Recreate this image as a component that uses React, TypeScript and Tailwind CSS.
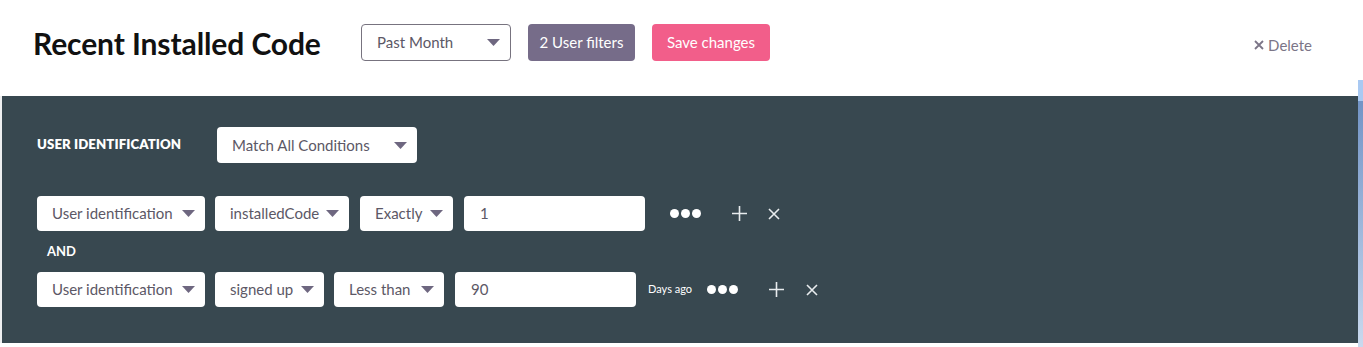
import React from 'react';

const Caret = ({ className = '' }: { className?: string }) => (
    <svg width="13" height="7" viewBox="0 0 13 7" className={className}>
        <path d="M0 0 H13 L6.5 7 Z" fill="#6e6780" />
    </svg>
);

const Select = ({ label, width, className = '' }: { label: string, width: number, className?: string }) => (
    <div
        className={`h-[35px] bg-white rounded-[4px] flex items-center justify-between pl-[15px] pr-[10px] text-[15px] text-[#5c5866] ${className}`}
        style={{ width }}
    >
        <span>{label}</span>
        <Caret />
    </div>
);

const Dots = () => (
    <div className="flex items-center gap-[2px]">
        <span className="w-[9px] h-[9px] rounded-full bg-white" />
        <span className="w-[9px] h-[9px] rounded-full bg-white" />
        <span className="w-[9px] h-[9px] rounded-full bg-white" />
    </div>
);

const Plus = () => (
    <svg width="15" height="15" viewBox="0 0 15 15">
        <path d="M7.5 0 V15 M0 7.5 H15" stroke="#e8ecee" strokeWidth="1.6" />
    </svg>
);

const Cross = () => (
    <svg width="12" height="12" viewBox="0 0 12 12">
        <path d="M1 1 L11 11 M11 1 L1 11" stroke="#e8ecee" strokeWidth="1.6" />
    </svg>
);

const App = () => {
    return (
        <div className="w-[1363px] h-[347px] bg-white flex overflow-hidden" style={{ fontFamily: 'Lato, "Open Sans", sans-serif' }}>
            <div className="flex-1 flex flex-col">
                {/* header */}
                <div className="h-[96px] flex items-center pl-[33px] pr-[46px]">
                    <h1 className="text-[30px] font-bold text-[#111] tracking-[-0.1px] w-[328px] -mt-[10px]">Recent Installed Code</h1>
                    <div className="flex items-center gap-[17px] -mt-[11px]">
                        <div className="w-[150px] h-[37px] border border-[#77737f] rounded-[4px] flex items-center justify-between pl-[15px] pr-[10px] text-[15px] text-[#5c5866]">
                            <span>Past Month</span>
                            <Caret />
                        </div>
                        <button className="w-[107px] h-[37px] rounded-[4px] bg-[#766c89] text-white text-[15px]">2 User filters</button>
                        <button className="w-[118px] h-[37px] rounded-[4px] bg-[#f25e8a] text-white text-[15px]">Save changes</button>
                    </div>
                    <div className="ml-auto flex items-center gap-[4px] text-[15px] text-[#7b7587] -mt-[6px]">
                        <svg width="10" height="10" viewBox="0 0 10 10">
                            <path d="M1 1 L9 9 M9 1 L1 9" stroke="#7b7587" strokeWidth="1.8" />
                        </svg>
                        <span>Delete</span>
                    </div>
                </div>

                {/* filter panel */}
                <div className="flex-1 mb-[4px] border-l-[2px] border-[#eeeff0] bg-[#384850] pl-[35px] pt-[31px]">
                    <div className="flex items-center">
                        <span className="w-[180px] text-[13.2px] font-extrabold text-white tracking-[0.1px]">USER IDENTIFICATION</span>
                        <Select label="Match All Conditions" width={200} className="h-[36px]" />
                    </div>

                    <div className="flex items-center mt-[33px]">
                        <Select label="User identification" width={168} />
                        <Select label="installedCode" width={134} className="ml-[10px]" />
                        <Select label="Exactly" width={93} className="ml-[11px]" />
                        <div className="w-[181px] h-[35px] bg-white rounded-[4px] ml-[11px] flex items-center pl-[16px] text-[15px] text-[#5c5866]">1</div>
                        <div className="ml-[25px]"><Dots /></div>
                        <div className="ml-[31px]"><Plus /></div>
                        <div className="ml-[21px]"><Cross /></div>
                    </div>

                    <div className="h-[41px] flex items-center pl-[10px] text-[13px] font-bold text-white">AND</div>

                    <div className="flex items-center">
                        <Select label="User identification" width={168} />
                        <Select label="signed up" width={109} className="ml-[10px]" />
                        <Select label="Less than" width={110} className="ml-[10px]" />
                        <div className="w-[181px] h-[35px] bg-white rounded-[4px] ml-[11px] flex items-center pl-[16px] text-[15px] text-[#5c5866]">90</div>
                        <span className="ml-[12px] text-[11px] text-white">Days ago</span>
                        <div className="ml-[15px]"><Dots /></div>
                        <div className="ml-[31px]"><Plus /></div>
                        <div className="ml-[22px]"><Cross /></div>
                    </div>
                </div>
            </div>

            {/* scrollbar strip */}
            <div className="w-[5px] mt-[80px] flex flex-col">
                <div className="h-[21px] bg-[#a9c9f2]" />
                <div className="flex-1 bg-gradient-to-b from-[#7294c6] to-[#c9d9ee]" />
            </div>
        </div>
    );
};

export default App;
